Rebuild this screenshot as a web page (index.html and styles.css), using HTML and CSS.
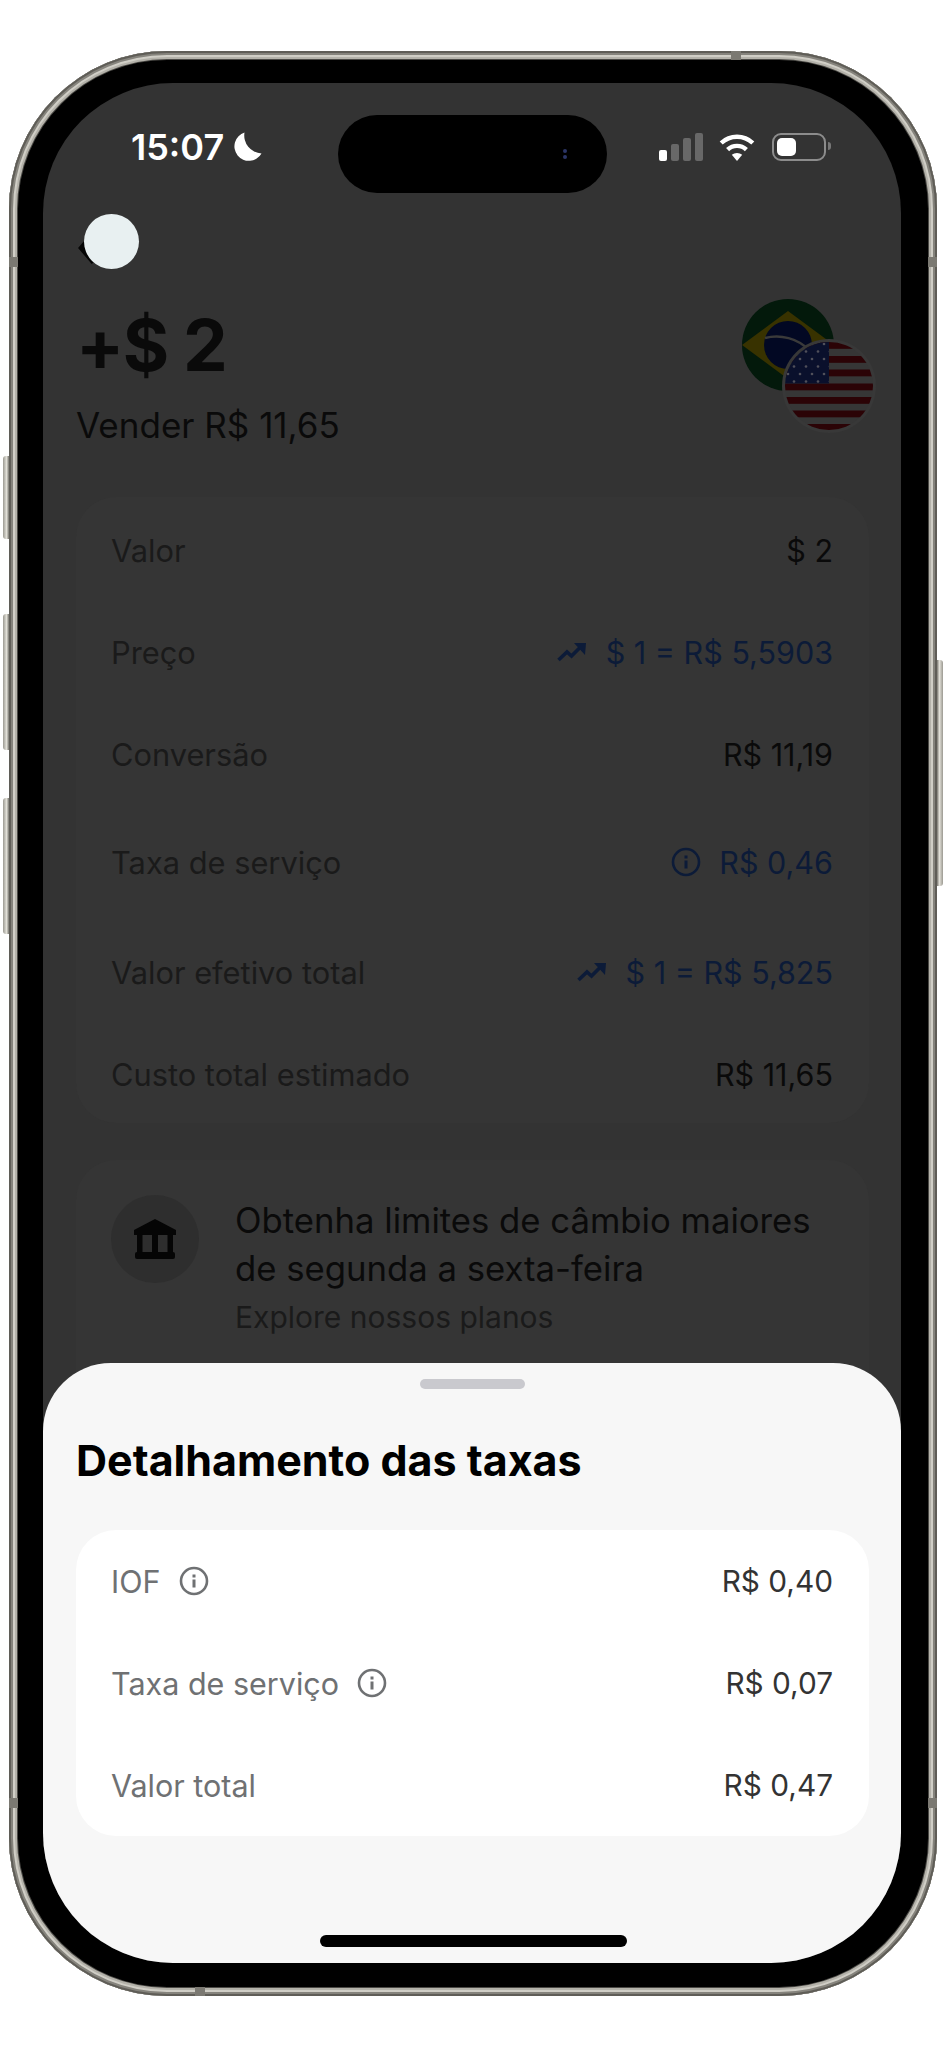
FILE: index.html
```html
<!DOCTYPE html>
<html lang="pt-BR">
<head>
  <meta charset="UTF-8" />
  <title>Detalhamento das taxas</title>
  <link rel="stylesheet" href="styles.css">
</head>
<body>

  <div class="phone">
    <span class="side-btn btn-mute"></span>
    <span class="side-btn btn-up"></span>
    <span class="side-btn btn-down"></span>
    <span class="side-btn btn-power"></span>
    <span class="band band-top"></span>
    <span class="band band-left"></span>
    <span class="band band-right"></span>
    <span class="band band-left-low"></span>
    <span class="band band-right-low"></span>
    <span class="band band-bottom"></span>

    <div class="screen">
      <div class="island">
        <span class="cam-dot"></span>
        <span class="cam-dot"></span>
      </div>

      <div class="status">
        <div class="status-left">
          <span class="time">15:07</span>
          <svg class="moon" viewBox="0 0 30 30"><path d="M12.5 .5A14.5 14.5 0 1 0 29.5 21.5 18 18 0 0 1 12.5 .5Z" fill="#fff"/></svg>
        </div>
        <div class="status-right">
          <div class="signal">
            <span class="bar bar-1"></span>
            <span class="bar bar-2"></span>
            <span class="bar bar-3"></span>
            <span class="bar bar-4"></span>
          </div>
          <svg class="wifi" viewBox="0 0 36 28" fill="none" stroke="#fff" stroke-width="4.4">
            <path d="M2.2 10A23 23 0 0 1 33.8 10"/>
            <path d="M8.6 16.6A13.6 13.6 0 0 1 27.4 16.6"/>
            <path d="M12.8 21.8 18 28 23.200 21.800A8 8 0 0 0 12.800 21.800Z" fill="#fff" stroke="none"/>
          </svg>
          <div class="battery">
            <span class="battery-fill"></span>
          </div>
        </div>
      </div>

      <div class="back">
        <svg class="back-arrow" viewBox="0 0 20 36" fill="none" stroke="#050505" stroke-width="6"><path d="M16 4 4 18 16 32"/></svg>
        <span class="back-dot"></span>
      </div>

      <div class="header">
        <div>
          <h1 class="amount">+$ 2</h1>
          <p class="sell">Vender R$ 11,65</p>
        </div>
        <div class="flags">
          <svg class="flag-br" viewBox="0 0 92 92">
            <clipPath id="brClip"><circle cx="46" cy="46" r="46"/></clipPath>
            <g clip-path="url(#brClip)">
              <rect width="92" height="92" fill="#03190b"/>
              <path d="M46 12 92 46 46 80 0 46Z" fill="#383200"/>
              <circle cx="46" cy="46" r="24" fill="#020823"/>
              <path d="M23 39C38 35 56 39 68 52" fill="none" stroke="#3a3a3a" stroke-width="2.500"/>
            </g>
          </svg>
          <svg class="flag-us" viewBox="0 0 96 96">
            <defs>
              <clipPath id="usClip"><circle cx="48" cy="48" r="44"/></clipPath>
              <pattern id="stars" width="12" height="15" patternUnits="userSpaceOnUse" patternTransform="translate(4 3)">
                <circle cx="3" cy="3" r="1.300" fill="#50505a"/>
                <circle cx="9" cy="10.500" r="1.300" fill="#50505a"/>
              </pattern>
            </defs>
            <circle cx="48" cy="48" r="47" fill="#383838"/>
            <g clip-path="url(#usClip)">
              <rect x="4" y="4" width="88" height="88" fill="#363636"/>
              <rect x="4" y="4" width="88" height="6.800" fill="#2b0306"/>
              <rect x="4" y="18" width="88" height="6.800" fill="#2b0306"/>
              <rect x="4" y="31.500" width="88" height="6.800" fill="#2b0306"/>
              <rect x="4" y="45.500" width="88" height="6.800" fill="#2b0306"/>
              <rect x="4" y="59" width="88" height="6.800" fill="#2b0306"/>
              <rect x="4" y="72.500" width="88" height="6.800" fill="#2b0306"/>
              <rect x="4" y="86" width="88" height="6.800" fill="#2b0306"/>
              <rect x="4" y="4" width="44" height="41.500" fill="#0a102c"/>
              <rect x="4" y="4" width="44" height="41.500" fill="url(#stars)"/>
            </g>
          </svg>
        </div>
      </div>

      <div class="card">
        <div class="row">
          <span class="label">Valor</span>
          <span class="value">$ 2</span>
        </div>
        <div class="row">
          <span class="label">Preço</span>
          <span class="value value-link">
            <svg class="trend" viewBox="0 0 29 19"><path d="M1.500 17 10 9l4.500 4L24 3.500" fill="none" stroke="currentColor" stroke-width="3.600"/><path d="M17 0 29 0 28 12Z" fill="currentColor"/></svg>
            $ 1 = R$ 5,5903
          </span>
        </div>
        <div class="row">
          <span class="label">Conversão</span>
          <span class="value">R$ 11,19</span>
        </div>
        <div class="row row-fee">
          <span class="label">Taxa de serviço</span>
          <span class="value value-link value-fee">
            <svg class="info" viewBox="0 0 30 30"><circle cx="15" cy="15" r="13" fill="none" stroke="currentColor" stroke-width="2.600"/><rect x="13.500" y="13.500" width="3" height="8" fill="currentColor"/><rect x="13.500" y="8.500" width="3" height="3" fill="currentColor"/></svg>
            R$ 0,46
          </span>
        </div>
        <div class="row row-rate">
          <span class="label">Valor efetivo total</span>
          <span class="value value-link">
            <svg class="trend" viewBox="0 0 29 19"><path d="M1.500 17 10 9l4.500 4L24 3.500" fill="none" stroke="currentColor" stroke-width="3.600"/><path d="M17 0 29 0 28 12Z" fill="currentColor"/></svg>
            $ 1 = R$ 5,825
          </span>
        </div>
        <div class="row row-last">
          <span class="label">Custo total estimado</span>
          <span class="value">R$ 11,65</span>
        </div>
      </div>

      <div class="card promo">
        <div class="promo-icon">
          <svg viewBox="0 0 42 40" width="42" height="40" fill="#050505"><path d="M21 0 42 11V16H0V11Z"/><rect x="3" y="15" width="5.500" height="19"/><rect x="18" y="15" width="6" height="19"/><rect x="33.500" y="15" width="5.500" height="19"/><rect x="1" y="33" width="40" height="7" rx="2"/></svg>
        </div>
        <div>
          <p class="promo-title">Obtenha limites de câmbio maiores<br>de segunda a sexta-feira</p>
          <p class="promo-sub">Explore nossos planos</p>
        </div>
      </div>

      <div class="sheet">
        <span class="handle"></span>
        <h2 class="sheet-title">Detalhamento das taxas</h2>
        <div class="fee-card">
          <div class="fee-row">
            <span class="fee-label">IOF
              <svg class="info" viewBox="0 0 30 30"><circle cx="15" cy="15" r="13" fill="none" stroke="currentColor" stroke-width="2.600"/><rect x="13.500" y="13.500" width="3" height="8" fill="currentColor"/><rect x="13.500" y="8.500" width="3" height="3" fill="currentColor"/></svg>
            </span>
            <span class="fee-value">R$ 0,40</span>
          </div>
          <div class="fee-row">
            <span class="fee-label">Taxa de serviço
              <svg class="info" viewBox="0 0 30 30"><circle cx="15" cy="15" r="13" fill="none" stroke="currentColor" stroke-width="2.600"/><rect x="13.500" y="13.500" width="3" height="8" fill="currentColor"/><rect x="13.500" y="8.500" width="3" height="3" fill="currentColor"/></svg>
            </span>
            <span class="fee-value">R$ 0,07</span>
          </div>
          <div class="fee-row">
            <span class="fee-label">Valor total</span>
            <span class="fee-value">R$ 0,47</span>
          </div>
        </div>
        <span class="home-bar"></span>
      </div>
    </div>
  </div>

</body>
</html>
```

FILE: styles.css
```css
* {
  margin: 0;
  padding: 0;
  box-sizing: border-box;
  font-family: 'Inter', 'Liberation Sans', sans-serif;
}

body {
  background: #ffffff;
  width: 946px;
  height: 2048px;
  overflow: hidden;
}

/* device frame */
.phone {
  position: relative;
  width: 928px;
  height: 1945px;
  margin: 51px 0 0 9px;
  padding: 32px 36px 33px 34px;
  background: #000;
  border-radius: 158px;
  box-shadow:
    inset 0 0 0 2px #5f5d57,
    inset 0 0 0 4px #85837c,
    inset 0 0 0 6px #d0cec6,
    inset 0 0 0 8px #b4b2aa,
    inset 0 0 0 9px #4a4945;
}

.side-btn {
  position: absolute;
  width: 6px;
  background: linear-gradient(90deg, #9b9991, #e4e2da 60%, #77756e);
  border-radius: 3px 0 0 3px;
}

.btn-mute { left: -6px; top: 405px; height: 83px; }
.btn-up { left: -6px; top: 563px; height: 136px; }
.btn-down { left: -6px; top: 747px; height: 136px; }

.btn-power {
  left: 928px;
  top: 609px;
  height: 226px;
  border-radius: 0 3px 3px 0;
  background: linear-gradient(90deg, #77756e, #e4e2da 40%, #9b9991);
}

.band {
  position: absolute;
  background: #7b7972;
}

.band-top { left: 722px; top: 0; width: 10px; height: 9px; }
.band-left { left: 0; top: 206px; width: 9px; height: 10px; }
.band-right { right: 0; top: 206px; width: 9px; height: 10px; }
.band-left-low { left: 0; top: 1747px; width: 9px; height: 10px; }
.band-right-low { right: 0; top: 1747px; width: 9px; height: 10px; }
.band-bottom { left: 186px; bottom: 0; width: 10px; height: 9px; }

.screen {
  position: relative;
  height: 100%;
  background: #333;
  border-radius: 130px;
  overflow: hidden;
}

.island {
  position: absolute;
  left: 295px;
  top: 32px;
  width: 269px;
  height: 78px;
  background: #000;
  border-radius: 39px;
  display: flex;
  flex-direction: column;
  align-items: flex-end;
  justify-content: center;
  gap: 2px;
  padding-right: 40px;
}

.cam-dot {
  width: 4px;
  height: 4px;
  border-radius: 50%;
  background: #2b3566;
}

/* status bar */
.status {
  display: flex;
  justify-content: space-between;
  align-items: center;
  height: 28px;
  margin-top: 50px;
  padding: 0 69px 0 88px;
}

.status-left,
.status-right {
  display: flex;
  align-items: center;
}

.time {
  font-size: 36px;
  font-weight: 600;
  letter-spacing: 0;
  color: #fff;
}

.moon {
  width: 30px;
  height: 30px;
  margin-left: 8px;
}

.signal {
  display: flex;
  align-items: flex-end;
  gap: 4px;
  height: 28px;
}

.bar {
  width: 8px;
  border-radius: 2px;
  background: #686868;
}

.bar-1 { height: 11px; background: #fff; }
.bar-2 { height: 17px; }
.bar-3 { height: 23px; }
.bar-4 { height: 28px; }

.wifi {
  width: 36px;
  height: 28px;
  margin-left: 16px;
}

.battery {
  position: relative;
  width: 54px;
  height: 28px;
  margin-left: 17px;
  margin-right: 6px;
  padding: 3px;
  border: 2px solid #8c8c8c;
  border-radius: 9px;
}

.battery::after {
  content: '';
  position: absolute;
  left: 54px;
  top: 7px;
  width: 3px;
  height: 8px;
  background: #777;
  border-radius: 0 3px 3px 0;
}

.battery-fill {
  display: block;
  width: 19px;
  height: 100%;
  background: #fff;
  border-radius: 5px;
}

/* back button */
.back {
  position: relative;
  width: 55px;
  height: 55px;
  margin: 53px 0 0 41px;
}

.back-arrow {
  position: absolute;
  left: -6px;
  top: 16px;
  width: 20px;
  height: 36px;
}

.back-dot {
  position: absolute;
  inset: 0;
  background: #e8f0f1;
  border-radius: 50%;
}

/* header */
.header {
  display: flex;
  justify-content: space-between;
  margin-top: 30px;
  padding: 0 28px 0 33px;
}

.amount {
  margin-top: 6px;
  font-size: 71px;
  font-weight: 700;
  letter-spacing: -1.5px;
  line-height: 80px;
  color: #0a0a0a;
}

.sell {
  margin-top: 20px;
  font-size: 35px;
  line-height: 40px;
  color: #0a0a0a;
}

.flags {
  position: relative;
  width: 131px;
  height: 132px;
}

.flag-br {
  display: block;
  width: 92px;
  height: 92px;
}

.flag-us {
  position: absolute;
  left: 39px;
  top: 39px;
  width: 96px;
  height: 96px;
}

/* cards */
.card {
  margin: 0 32px 0 33px;
  background: #353535;
  border-radius: 40px;
}

.header + .card {
  margin-top: 52px;
  padding-top: 2px;
}

.row {
  display: flex;
  justify-content: space-between;
  align-items: center;
  height: 102px;
  padding: 0 36px 0 35px;
  font-size: 30.8px;
}

.row-fee { height: 114px; }
.row-rate { height: 106px; }
.row-last { height: 98px; }

.label {
  color: #1a1a1a;
}

.value {
  display: flex;
  align-items: center;
  gap: 20px;
  font-size: 30.5px;
  color: #0a0a0a;
}

.value-link {
  color: #0c1b38;
}

.value-fee {
  gap: 18px;
}

.trend {
  width: 29px;
  height: 19px;
}

.info {
  width: 30px;
  height: 30px;
}

.promo {
  display: flex;
  gap: 36px;
  margin-top: 37px;
  padding: 36px 35px 120px;
}

.promo-icon {
  display: flex;
  justify-content: center;
  align-items: center;
  flex: none;
  width: 88px;
  height: 88px;
  margin-top: -1px;
  background: #2e2e2e;
  border-radius: 50%;
}

.promo-title {
  font-size: 34.7px;
  line-height: 48px;
  color: #0a0a0a;
}

.promo-sub {
  margin-top: 5px;
  font-size: 30px;
  line-height: 40px;
  color: #1a1a1a;
}

/* bottom sheet */
.sheet {
  position: absolute;
  left: 0;
  right: 0;
  bottom: 0;
  height: 600px;
  display: flex;
  flex-direction: column;
  background: #f7f7f7;
  border-radius: 68px 68px 0 0;
}

.handle {
  align-self: center;
  width: 105px;
  height: 10px;
  margin-top: 16px;
  background: #c9c9ce;
  border-radius: 5px;
}

.sheet-title {
  margin: 46px 0 45px 33px;
  font-size: 43px;
  font-weight: 700;
  line-height: 50px;
  color: #000;
}

.fee-card {
  margin: 0 32px 0 33px;
  background: #fff;
  border-radius: 40px;
}

.fee-row {
  display: flex;
  justify-content: space-between;
  align-items: center;
  height: 102px;
  padding: 0 36px 0 35px;
  font-size: 30.5px;
}

.fee-label {
  display: flex;
  align-items: center;
  gap: 18px;
  color: #6f7173;
}

.fee-value {
  font-size: 29.8px;
  color: #333;
}

.home-bar {
  align-self: center;
  width: 307px;
  height: 12px;
  margin-top: auto;
  margin-bottom: 16px;
  margin-left: 2px;
  background: #000;
  border-radius: 6px;
}
```
